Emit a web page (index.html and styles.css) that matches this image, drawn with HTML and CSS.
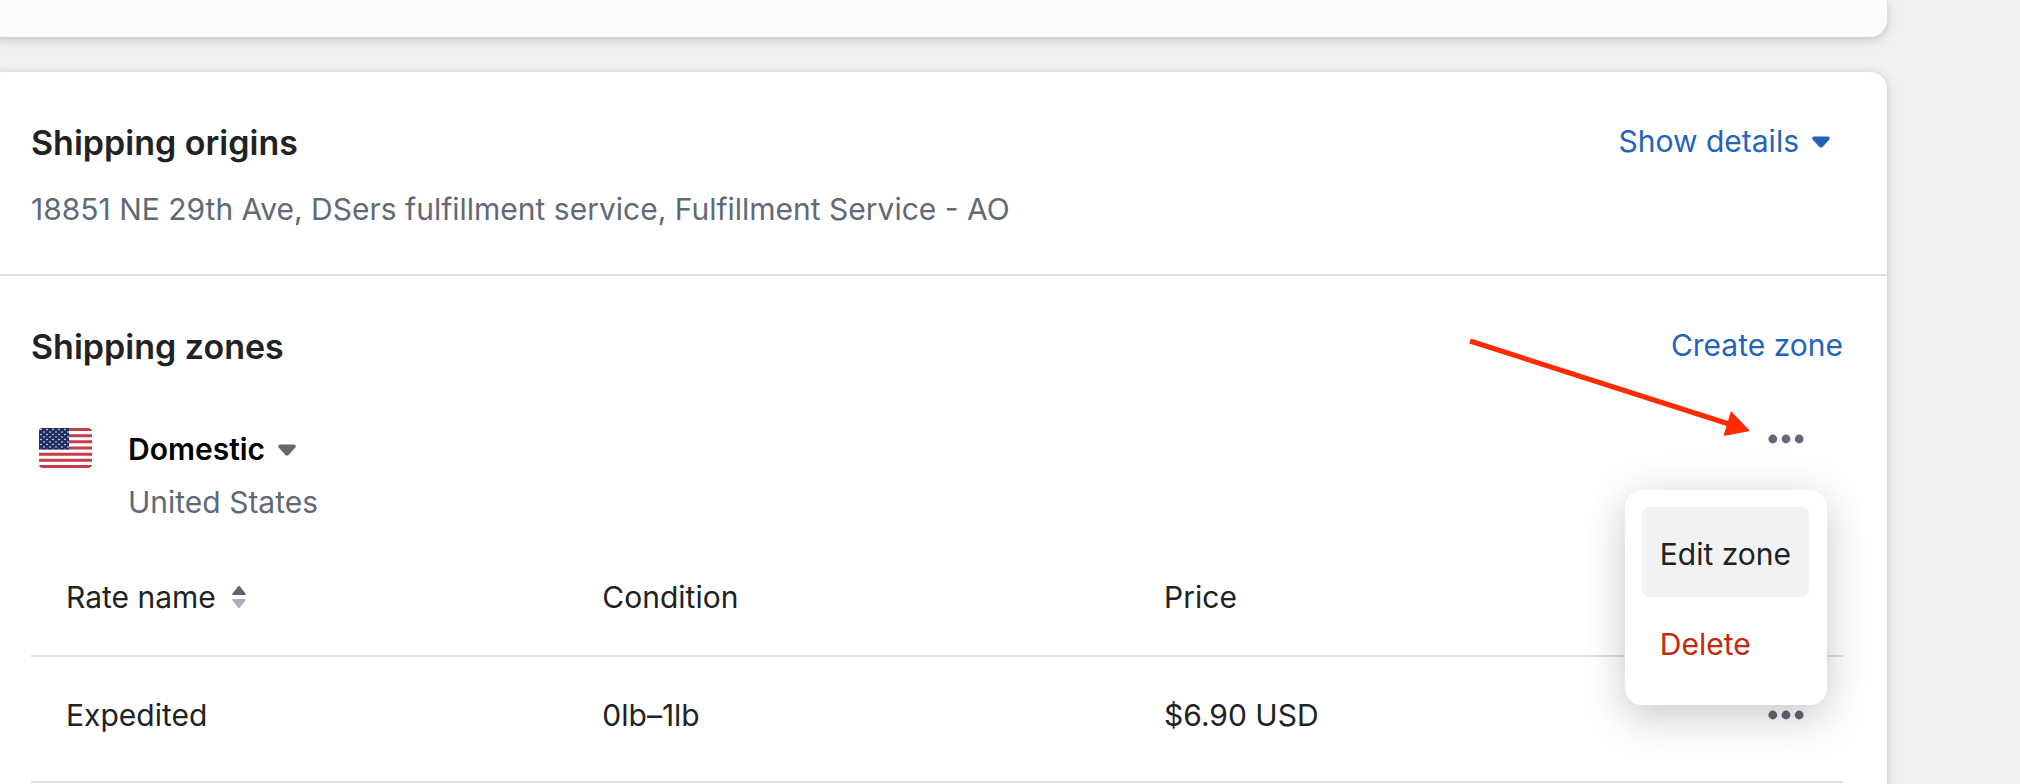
FILE: index.html
```html
<!DOCTYPE html>
<html lang="en">

<head>
  <meta charset="UTF-8" />
  <meta name="viewport" content="width=device-width, initial-scale=1.0" />
  <title>Shipping profile</title>
  <link rel="stylesheet" href="styles.css">
</head>

<body>
  <svg class="symbols" aria-hidden="true">
    <symbol id="caret" viewBox="0 0 20 20">
      <path d="M13.098 8H6.902c-.751 0-1.172.754-.708 1.268L9.292 12.7c.36.399 1.055.399 1.416 0l3.098-3.433C14.27 8.754 13.849 8 13.098 8Z" />
    </symbol>
    <symbol id="dots" viewBox="0 0 20 20">
      <circle cx="4" cy="10" r="2" />
      <circle cx="10" cy="10" r="2" />
      <circle cx="16" cy="10" r="2" />
    </symbol>
  </svg>

  <main class="page">
    <section class="card card-subdued"></section>

    <div class="card">
      <section class="section">
        <div class="section-header">
          <h2>Shipping origins</h2>
          <button type="button" class="link-button">Show details<svg class="icon"><use href="#caret" /></svg></button>
        </div>
        <p class="origins">18851 NE 29th Ave, DSers fulfillment service, Fulfillment Service - AO</p>
      </section>

      <section class="section">
        <div class="section-header">
          <h2>Shipping zones</h2>
          <a class="link" href="#create-zone">Create zone</a>
        </div>

        <div class="zone">
          <svg class="flag" viewBox="0 0 53 40" role="img" aria-label="United States flag">
            <defs>
              <clipPath id="flag-clip"><rect width="53" height="40" rx="4" /></clipPath>
              <pattern id="stars" width="6" height="5" patternUnits="userSpaceOnUse">
                <circle cx="2" cy="1.5" r="0.8" fill="#fff" />
                <circle cx="5" cy="4" r="0.8" fill="#fff" />
              </pattern>
            </defs>
            <g clip-path="url(#flag-clip)">
              <rect width="53" height="40" fill="#fff" />
              <path d="M0 1.5h53M0 7.7h53M0 13.8h53M0 20h53M0 26.2h53M0 32.3h53M0 38.5h53" stroke="#c43e47" stroke-width="3" />
              <rect width="30" height="21.5" fill="#1d2f63" />
              <rect width="30" height="21.5" fill="url(#stars)" />
            </g>
          </svg>
          <div class="zone-info">
            <button type="button" class="zone-name">Domestic<svg class="icon"><use href="#caret" /></svg></button>
            <p class="zone-countries">United States</p>
          </div>
          <div class="zone-actions">
            <button type="button" class="icon-button" aria-label="Zone actions" aria-expanded="true"><svg class="icon"><use href="#dots" /></svg></button>
            <div class="menu">
              <button type="button" class="menu-item active">Edit zone</button>
              <button type="button" class="menu-item destructive">Delete</button>
            </div>
            <svg class="arrow" viewBox="0 0 290 105" aria-hidden="true">
              <path d="M4 6 266 90" stroke="#ff2a00" stroke-width="5" />
              <path d="M284 96 265 76 257.500 101Z" fill="#ff2a00" />
            </svg>
          </div>
        </div>

        <table class="rates">
          <thead>
            <tr>
              <th class="col-name" scope="col">
                <button type="button" class="sort">Rate name<svg class="sort-icon" viewBox="0 0 16 24">
                    <path d="M9 1.500 14.500 8.500Q15.500 10 14 10H2Q.5 10 1.500 8.500L7 1.500Q8 .5 9 1.500Z" fill="#5c6470" />
                    <path d="M9 22.500 14.500 15.500Q15.500 14 14 14H2Q.5 14 1.500 15.500L7 22.500Q8 23.500 9 22.500Z" fill="#aeb0ba" />
                  </svg></button>
              </th>
              <th class="col-condition" scope="col">Condition</th>
              <th scope="col">Price</th>
              <th class="col-actions" scope="col"></th>
            </tr>
          </thead>
          <tbody>
            <tr>
              <td>Expedited</td>
              <td>0lb–1lb</td>
              <td>$6.90 USD</td>
              <td><button type="button" class="icon-button" aria-label="Rate actions"><svg class="icon"><use href="#dots" /></svg></button></td>
            </tr>
          </tbody>
        </table>
      </section>
    </div>
  </main>
</body>

</html>
```

FILE: styles.css
```css
* {
  box-sizing: border-box;
}

body {
  margin: 0;
  background: #f0f1f3;
  color: #202223;
  font-family: Inter, "Liberation Sans", sans-serif;
  font-size: 30px;
  line-height: 44px;
  overflow: hidden;
}

h2,
p {
  margin: 0;
}

h2 {
  font-size: 34px;
  line-height: 54px;
  font-weight: 600;
}

button {
  padding: 0;
  border: none;
  background: none;
  color: inherit;
  font: inherit;
  cursor: pointer;
}

.symbols {
  position: absolute;
  width: 0;
  height: 0;
}

.icon {
  display: block;
  width: 44px;
  height: 44px;
  fill: currentColor;
}

.page {
  display: flex;
  flex-direction: column;
  gap: 35px;
  margin: 0 133px 0 -14px;
}

.card {
  background: #fff;
  border-radius: 17px;
  box-shadow: 0 0 11px rgba(23, 24, 24, 0.05), 0 3px 12px rgba(0, 0, 0, 0.15);
}

.card-subdued {
  height: 37px;
  background: #fafbfc;
  border-radius: 0 0 17px 17px;
}

.section {
  padding: 44px 44px 43px 45px;
}

.section + .section {
  border-top: 2px solid #dfe0e5;
}

.section-header {
  display: flex;
  justify-content: space-between;
  align-items: flex-start;
}

.link,
.link-button {
  padding: 3px 0;
  color: #2463bc;
  text-decoration: none;
}

.link-button,
.zone-name,
.sort {
  display: flex;
  align-items: center;
}

.origins {
  margin-top: 17px;
  color: #616975;
}

.zone {
  display: flex;
  align-items: flex-start;
  margin-top: 53px;
}

.flag {
  width: 53px;
  height: 40px;
  margin: 1px 36px 0 8px;
}

.zone-info {
  flex: 1;
}

.zone-name {
  color: #000;
  font-weight: 600;
}

.zone-name .icon {
  color: #616975;
}

.zone-countries {
  margin-top: 9px;
  color: #616975;
}

.zone-actions {
  position: relative;
  margin: -10px 35px 0 0;
}

.icon-button {
  display: block;
  margin-left: auto;
  color: #616975;
}

.menu {
  position: absolute;
  top: 73px;
  right: -19px;
  z-index: 1;
  padding: 17px 18px 18px 17px;
  background: #fff;
  border-radius: 17px;
  box-shadow: 0 0 44px rgba(23, 24, 24, 0.08), 0 16px 40px rgba(23, 24, 24, 0.16);
}

.menu-item {
  display: block;
  width: 100%;
  padding: 25px 18px 21px;
  border-radius: 8px;
  text-align: left;
  white-space: nowrap;
}

.menu-item.active {
  background: #f1f2f4;
}

.menu-item.destructive {
  color: #c5280c;
}

.arrow {
  position: absolute;
  top: -82px;
  right: 52px;
  width: 290px;
  height: 105px;
  fill: none;
  pointer-events: none;
}

.rates {
  width: 100%;
  margin-top: 15px;
  border-collapse: collapse;
  table-layout: fixed;
}

.rates th,
.rates td {
  padding: 36px 35px;
  border-bottom: 2px solid #dfe0e5;
  font-weight: 400;
  text-align: left;
}

.rates td {
  padding-bottom: 44px;
}

.col-name {
  width: 29.6%;
}

.col-condition {
  width: 31%;
}

.col-actions {
  width: 10%;
}

.sort-icon {
  width: 16px;
  height: 24px;
  margin-left: 15px;
}
```
